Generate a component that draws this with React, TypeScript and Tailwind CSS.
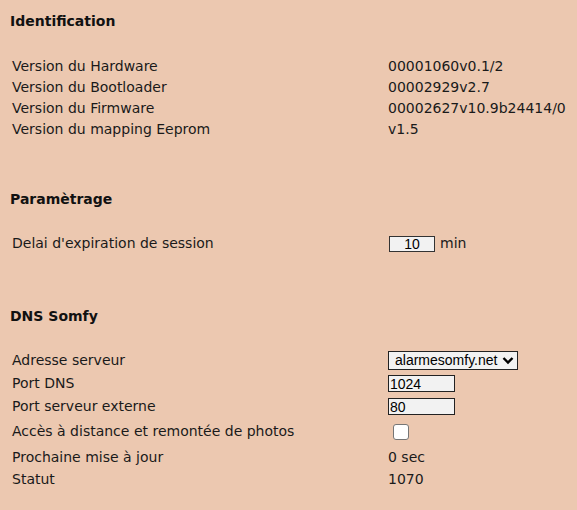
import React from "react";

const font = { fontFamily: '"DejaVu Sans", Verdana, sans-serif' };
const arial = { fontFamily: '"Liberation Sans", Arial, sans-serif' };

function Row({ label, children, h = "h-[21px]" }: { label: string; children: React.ReactNode; h?: string }) {
  return (
    <div className={`flex items-center ${h}`}>
      <div className="w-[388px] pl-[12px]">{label}</div>
      <div className="flex items-center">{children}</div>
    </div>
  );
}

export default function App() {
  return (
    <div className="w-[577px] h-[510px] bg-[#ecc8b0] text-[14px] text-[#1a1a1a] overflow-hidden" style={font}>
      <div className="pt-[11px]">
        <div className="h-[20px] leading-[20px] pl-[10px] font-bold text-[#111]">Identification</div>
        <div className="mt-[25px]">
          <Row label="Version du Hardware">00001060v0.1/2</Row>
          <Row label="Version du Bootloader">00002929v2.7</Row>
          <Row label="Version du Firmware">00002627v10.9b24414/0</Row>
          <Row label="Version du mapping Eeprom">v1.5</Row>
        </div>
        <div className="mt-[49px] h-[20px] leading-[20px] pl-[10px] font-bold text-[#111]">Paramètrage</div>
        <div className="mt-[24px]">
          <Row label="Delai d'expiration de session">
            <input
              readOnly
              value="10"
              className="ml-[1px] w-[46px] h-[16px] border border-[#333] bg-[#f2f2f2] text-center text-[14px] leading-[14px] px-0 text-black"
              style={arial}
            />
            <span className="ml-[5px] text-[14px]">min</span>
          </Row>
        </div>
        <div className="mt-[52px] h-[20px] leading-[20px] pl-[10px] font-bold text-[#111]">DNS Somfy</div>
        <div className="mt-[23px]">
          <Row label="Adresse serveur" h="h-[23px]">
            <div
              className="w-[130px] h-[19px] border border-[#222] bg-[#f2f2f2] flex items-center justify-between pl-[6px] pr-[3px] text-[14px] text-black"
              style={arial}
            >
              <span>alarmesomfy.net</span>
              <svg width="12" height="9" viewBox="0 0 12 9">
                <path d="M1.5 2 L6 6.5 L10.5 2" fill="none" stroke="#000" strokeWidth="2.4" />
              </svg>
            </div>
          </Row>
          <Row label="Port DNS" h="h-[23px]">
            <input
              readOnly
              value="1024"
              className="w-[67px] h-[17px] border border-[#222] bg-[#f2f2f2] px-[1px] text-[14px] leading-[15px] text-black"
              style={arial}
            />
          </Row>
          <Row label="Port serveur externe" h="h-[23px]">
            <input
              readOnly
              value="80"
              className="w-[67px] h-[17px] border border-[#222] bg-[#f2f2f2] px-[1px] text-[14px] leading-[15px] text-black"
              style={arial}
            />
          </Row>
          <Row label="Accès à distance et remontée de photos" h="h-[27px]">
            <div className="ml-[5px] w-[16px] h-[16px] rounded-[3px] border border-[#767676] bg-white" />
          </Row>
          <Row label="Prochaine mise à jour" h="h-[24px]">0 sec</Row>
          <Row label="Statut" h="h-[20px]">1070</Row>
        </div>
      </div>
    </div>
  );
}
